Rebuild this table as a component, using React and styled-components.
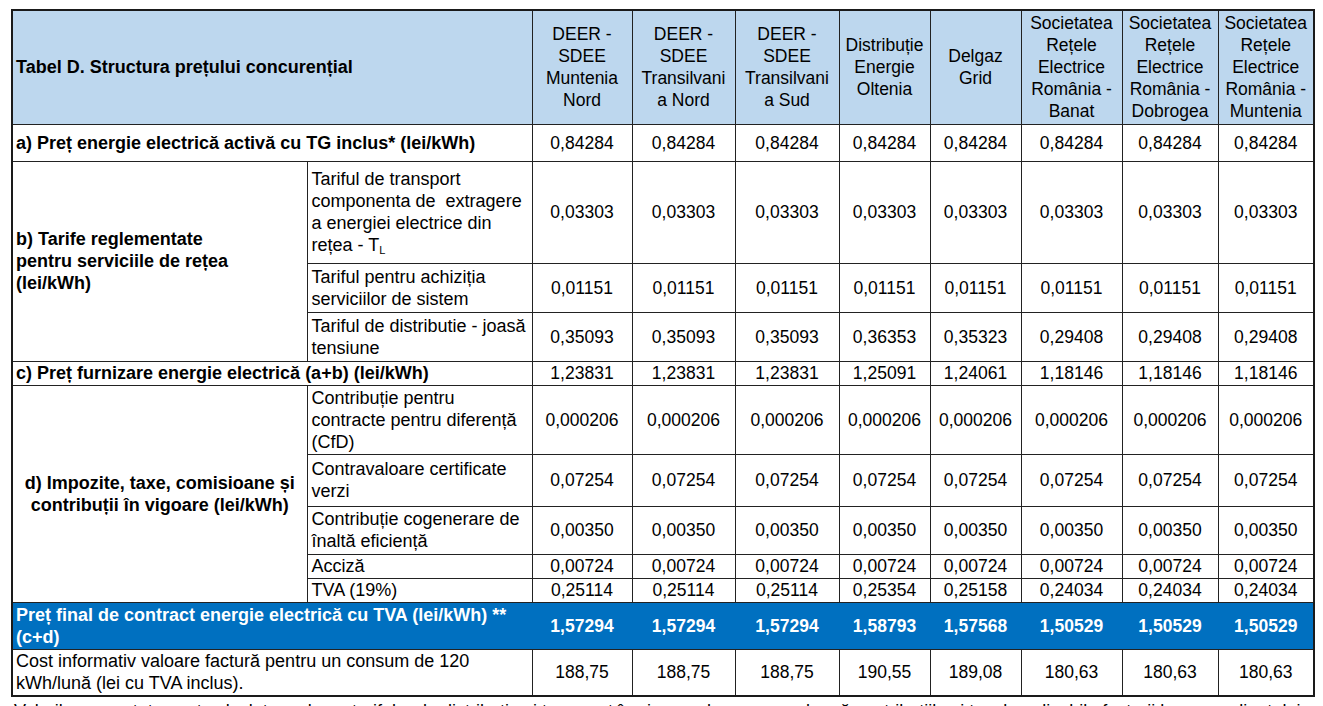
import styled, { createGlobalStyle } from 'styled-components';

const GlobalStyle = createGlobalStyle`
  html, body {
    margin: 0;
    padding: 0;
    background: #fff;
    overflow: hidden;
  }
  body {
    font-family: 'Liberation Sans', Arial, sans-serif;
    color: #000;
  }
`;

const columns = [
  ['DEER -', 'SDEE', 'Muntenia', 'Nord'],
  ['DEER -', 'SDEE', 'Transilvani', 'a Nord'],
  ['DEER -', 'SDEE', 'Transilvani', 'a Sud'],
  ['Distribuție', 'Energie', 'Oltenia'],
  ['Delgaz', 'Grid'],
  ['Societatea', 'Rețele', 'Electrice', 'România -', 'Banat'],
  ['Societatea', 'Rețele', 'Electrice', 'România -', 'Dobrogea'],
  ['Societatea', 'Rețele', 'Electrice', 'România -', 'Muntenia'],
];

const colWidths = [295, 225, 100, 103, 104, 91, 91, 101, 96, 96];

const same = (v) => Array(8).fill(v);
const split = (a, b, c, d) => [a, a, a, b, c, d, d, d];

function App() {
  return (
    <Page>
      <GlobalStyle />
      <Table>
        <colgroup>
          {colWidths.map((w, i) => (
            <col key={i} style={{ width: w }} />
          ))}
        </colgroup>
        <tbody>
          <HeadRow>
            <TitleCell colSpan={2}>Tabel D. Structura prețului concurențial</TitleCell>
            {columns.map((lines, i) => (
              <HeadCell key={i}>
                {lines.map((l, j) => (
                  <div key={j}>{l}</div>
                ))}
              </HeadCell>
            ))}
          </HeadRow>

          <Row $h={37}>
            <Label colSpan={2} $bold>
              a) Preț energie electrică activă cu TG inclus* (lei/kWh)
            </Label>
            {same('0,84284').map((v, i) => (
              <Value key={i}>{v}</Value>
            ))}
          </Row>

          <Row $h={102}>
            <GroupLabel rowSpan={3}>
              b) Tarife reglementate
              <br />
              pentru serviciile de rețea
              <br />
              (lei/kWh)
            </GroupLabel>
            <SubLabel>
              Tariful de transport
              <br />
              componenta de&nbsp; extragere
              <br />
              a energiei electrice din
              <br />
              rețea - T<sub>L</sub>
            </SubLabel>
            {same('0,03303').map((v, i) => (
              <Value key={i}>{v}</Value>
            ))}
          </Row>
          <Row $h={49}>
            <SubLabel>
              Tariful pentru achiziția
              <br />
              serviciilor de sistem
            </SubLabel>
            {same('0,01151').map((v, i) => (
              <Value key={i}>{v}</Value>
            ))}
          </Row>
          <Row $h={49}>
            <SubLabel>
              Tariful de distributie - joasă
              <br />
              tensiune
            </SubLabel>
            {split('0,35093', '0,36353', '0,35323', '0,29408').map((v, i) => (
              <Value key={i}>{v}</Value>
            ))}
          </Row>

          <Row $h={24}>
            <Label colSpan={2} $bold>
              c) Preț furnizare energie electrică (a+b) (lei/kWh)
            </Label>
            {split('1,23831', '1,25091', '1,24061', '1,18146').map((v, i) => (
              <Value key={i}>{v}</Value>
            ))}
          </Row>

          <Row $h={69}>
            <GroupLabel rowSpan={5} $center>
              d) Impozite, taxe, comisioane și
              <br />
              contribuții în vigoare (lei/kWh)
            </GroupLabel>
            <SubLabel>
              Contribuție pentru
              <br />
              contracte pentru diferență
              <br />
              (CfD)
            </SubLabel>
            {same('0,000206').map((v, i) => (
              <Value key={i}>{v}</Value>
            ))}
          </Row>
          <Row $h={52}>
            <SubLabel>
              Contravaloare certificate
              <br />
              verzi
            </SubLabel>
            {same('0,07254').map((v, i) => (
              <Value key={i}>{v}</Value>
            ))}
          </Row>
          <Row $h={48}>
            <SubLabel>
              Contribuție cogenerare de
              <br />
              înaltă eficiență
            </SubLabel>
            {same('0,00350').map((v, i) => (
              <Value key={i}>{v}</Value>
            ))}
          </Row>
          <Row $h={24}>
            <SubLabel>Acciză</SubLabel>
            {same('0,00724').map((v, i) => (
              <Value key={i}>{v}</Value>
            ))}
          </Row>
          <Row $h={24}>
            <SubLabel>TVA (19%)</SubLabel>
            {split('0,25114', '0,25354', '0,25158', '0,24034').map((v, i) => (
              <Value key={i}>{v}</Value>
            ))}
          </Row>

          <FinalRow>
            <FinalLabel colSpan={2}>
              Preț final de contract energie electrică cu TVA (lei/kWh) **
              <br />
              (c+d)
            </FinalLabel>
            {split('1,57294', '1,58793', '1,57568', '1,50529').map((v, i) => (
              <FinalValue key={i}>{v}</FinalValue>
            ))}
          </FinalRow>

          <Row $h={47}>
            <Label colSpan={2}>
              Cost informativ valoare factură pentru un consum de 120
              <br />
              kWh/lună (lei cu TVA inclus).
            </Label>
            {split('188,75', '190,55', '189,08', '180,63').map((v, i) => (
              <Value key={i}>{v}</Value>
            ))}
          </Row>
        </tbody>
      </Table>
      <Note>
        Valorile prezentate sunt calculate pe baza tarifelor de distribuție și transport în vigoare, la care se adaugă
        contribuțiile și taxele aplicabile facturii lunare a clientului.
      </Note>
    </Page>
  );
}

export default App;

const Page = styled.div`
  width: 1323px;
  height: 706px;
  padding: 9px 0 0 11px;
  box-sizing: border-box;
  overflow: hidden;
`;

const Table = styled.table`
  width: 1302px;
  table-layout: fixed;
  border-collapse: collapse;
  border: 2px solid #1a1a1a;
  font-size: 18px;
  line-height: 22px;

  td {
    border: 1px solid #222;
    padding: 0 3px;
    overflow: hidden;
  }

  sub {
    font-size: 11px;
    line-height: 0;
    vertical-align: -3px;
  }
`;

const Row = styled.tr`
  height: ${(p) => p.$h}px;
`;

const HeadRow = styled.tr`
  height: 114px;
  background: #bdd7ee;
`;

const TitleCell = styled.td`
  font-weight: bold;
  text-align: left;
  vertical-align: middle;
`;

const HeadCell = styled.td`
  font-size: 17.5px;
  text-align: center;
  vertical-align: middle;
  white-space: nowrap;
`;

const Label = styled.td`
  font-weight: ${(p) => (p.$bold ? 'bold' : 'normal')};
  text-align: left;
  vertical-align: middle;
  white-space: nowrap;
`;

const GroupLabel = styled.td`
  font-weight: bold;
  text-align: ${(p) => (p.$center ? 'center' : 'left')};
  vertical-align: middle;
  white-space: nowrap;
`;

const SubLabel = styled.td`
  text-align: left;
  vertical-align: middle;
  white-space: nowrap;
  && {
    padding-left: 4px;
  }
`;

const Value = styled.td`
  font-size: 17.5px;
  text-align: center;
  vertical-align: middle;
  white-space: nowrap;
`;

const FinalRow = styled.tr`
  height: 47px;
  background: #0070c0;
  color: #fff;
  font-weight: bold;

  && td {
    border-left-color: #0070c0;
    border-right-color: #0070c0;
  }
`;

const FinalLabel = styled.td`
  text-align: left;
  vertical-align: middle;
  white-space: nowrap;
`;

const FinalValue = styled.td`
  font-size: 17.5px;
  text-align: center;
  vertical-align: middle;
`;

const Note = styled.p`
  margin: 3px 0 0 3px;
  font-size: 18px;
  line-height: 22px;
  white-space: nowrap;
`;
